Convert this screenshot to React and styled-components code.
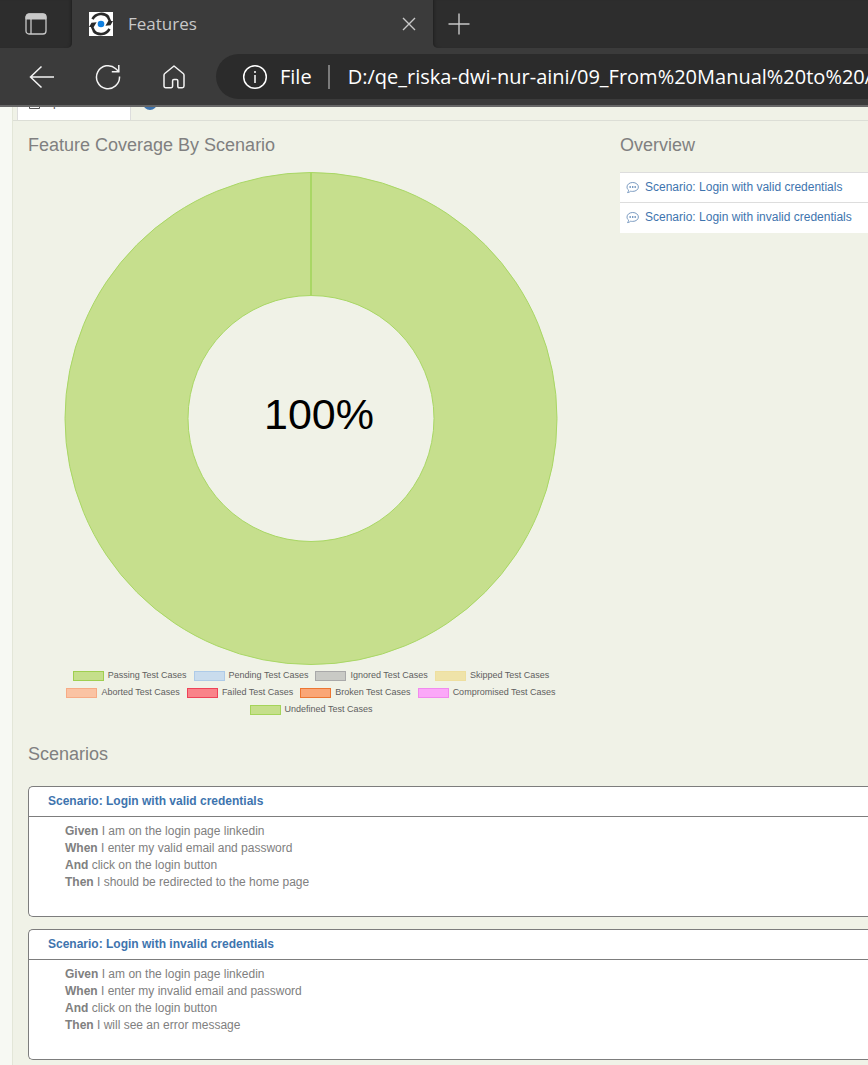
import React from "react";
import styled, { createGlobalStyle } from "styled-components";

const GlobalStyle = createGlobalStyle`
  *, *::before, *::after { box-sizing: border-box; }
  body {
    margin: 0;
    background: #f0f2e7;
    color: #808080;
    font: 12px/17px "Liberation Sans", Arial, sans-serif;
    overflow-x: hidden;
  }
  h2, h3, p, ul { margin: 0; padding: 0; }
  ul { list-style: none; }
  a { color: #3e74ae; text-decoration: none; }
`;

const chromeFont = `"Open Sans", "Noto Sans", sans-serif`;

/* ---------- browser chrome ---------- */

const Chrome = styled.header`
  background: #3b3b3b;
  border-bottom: 2px solid #676767;
  font-family: ${chromeFont};
`;

const TabStrip = styled.div`
  display: flex;
  height: 48px;
  background: #3b3b3b;
`;

const StripSide = styled.div`
  display: flex;
  align-items: center;
  background: #2d2d2d;
  padding: 0 12px;
  flex: ${(p) => (p.$grow ? "1" : "0 0 70px")};
  border-radius: ${(p) => (p.$grow ? "0 0 0 5px" : "0 0 5px 0")};
  box-shadow: inset ${(p) => (p.$grow ? "3px" : "-3px")} 0 3px -2px #202020;
`;

const ActiveTab = styled.div`
  display: flex;
  align-items: center;
  flex: 0 1 361px;
  padding: 0 12px 0 17px;
  gap: 15px;
  color: #c8c8c8;
  font-size: 17px;
  line-height: 24px;
`;

const TabTitle = styled.span`
  flex: 1;
`;

const IconButton = styled.button`
  display: flex;
  align-items: center;
  justify-content: center;
  flex: none;
  width: ${(p) => p.$size || 24}px;
  height: ${(p) => p.$size || 24}px;
  padding: 0;
  border: 0;
  background: none;
  color: ${(p) => (p.$dim ? "#c8c8c8" : "#f4f4f4")};
`;

const Toolbar = styled.div`
  display: flex;
  align-items: center;
  height: 57px;
  padding-left: 28px;
  gap: 38px;
`;

const AddressBar = styled.div`
  display: flex;
  align-items: center;
  flex: 1;
  min-width: 0;
  height: 45px;
  margin-left: -10px;
  padding-left: 26px;
  gap: 12px;
  border-radius: 23px 0 0 23px;
  background: #2b2b2b;
  color: #fff;
  font-size: 20px;
`;

const Divider = styled.span`
  width: 2px;
  height: 24px;
  margin: 0 6px 0 4px;
  background: #7b7b7b;
`;

const AddressInput = styled.input`
  flex: 1;
  min-width: 0;
  height: 32px;
  padding: 0;
  border: 0;
  outline: 0;
  background: none;
  color: inherit;
  font: 20px/28px ${chromeFont};
`;

/* ---------- report page ---------- */

const Report = styled.main`
  margin-left: 12px;
  border-left: 1px solid #e3e6d8;
  background: #f0f2e7;
  padding-bottom: 5px;
`;

const PageShell = styled.div`
  background: #f7f9f3;
`;

const ReportTabs = styled.nav`
  display: flex;
  align-items: flex-end;
  height: 14px;
  padding-left: 4px;
  overflow: hidden;
  border-bottom: 1px solid #dcded6;
`;

const ReportTab = styled.a`
  display: flex;
  align-items: center;
  gap: 5px;
  flex: none;
  height: 36px;
  padding: 0 11px;
  border: 1px solid ${(p) => (p.$active ? "#ddd" : "transparent")};
  border-bottom: 0;
  background: ${(p) => (p.$active ? "#fff" : "none")};
  color: ${(p) => (p.$active ? "#555" : "#3e74ae")};
`;

const Content = styled.div`
  padding-left: 15px;
`;

const SectionTitle = styled.h2`
  color: #808080;
  font-size: 18px;
  font-weight: 400;
  line-height: 20px;
`;

const Columns = styled.div`
  display: grid;
  grid-template-columns: 283fr 124fr;
  gap: 26px;
  padding-top: 14px;
`;

const ChartFigure = styled.figure`
  display: flex;
  flex-direction: column;
  align-items: center;
  margin: 16px 0 0;
`;

const Donut = styled.svg`
  display: block;
  width: 100%;
  max-width: 494px;
`;

const Legend = styled.ul`
  display: flex;
  flex-wrap: wrap;
  justify-content: center;
  column-gap: 7px;
  width: 100%;
  max-width: 500px;
  padding-top: 2px;
`;

const LegendItem = styled.li`
  display: flex;
  align-items: center;
  gap: 4px;
  color: #606060;
  font-size: 9px;
  line-height: 17px;
  white-space: nowrap;
`;

const Swatch = styled.span`
  width: 31px;
  height: 10px;
  margin-top: 1px;
  border: 1px solid ${(p) => p.$line};
  background: ${(p) => p.$fill};
`;

const OverviewList = styled.ul`
  margin-top: 17px;
  padding-bottom: 1px;
  background: #fff;
`;

const OverviewItem = styled.li`
  display: flex;
  align-items: center;
  gap: 6px;
  height: 30px;
  padding-left: 6px;
  border-top: 1px solid #ddd;
  white-space: nowrap;
`;

const Scenarios = styled.section`
  display: flex;
  flex-direction: column;
  gap: 12px;
  padding-top: 26px;

  ${SectionTitle} { margin-bottom: 10px; }
`;

const Card = styled.article`
  min-height: 131px;
  border: 1px solid #7d7d7d;
  border-right: 0;
  border-radius: 5px 0 0 5px;
  background: #fff;
`;

const CardTitle = styled.h3`
  padding: 5px 19px 6px;
  border-bottom: 1px solid #7d7d7d;
  font-size: 12px;
  line-height: 18px;
`;

const Steps = styled.div`
  padding: 6px 36px 0;
  line-height: 17px;
`;

const CoverageIcon = () => (
  <svg width="24" height="24" viewBox="0 0 24 24" aria-hidden="true">
    <rect width="24" height="24" fill="#fff" />
    <g fill="none" stroke="#2a2a2a" strokeWidth="2.6">
      <path d="M3.500 7.200A9.800 9.800 0 0 1 19.500 5.200" />
      <path d="M20.500 16.800A9.800 9.800 0 0 1 4.500 18.800" />
    </g>
    <path d="M0 15L2.500 10.800 7.600 10.200 4.600 15.200 6.500 19 3.800 19.500 1.800 15Z" fill="#2a2a2a" />
    <path d="M24 9L21.500 13.200 16.400 13.800 19.400 8.800 17.500 5 20.200 4.500 22.200 9Z" fill="#2a2a2a" />
    <circle cx="12" cy="12" r="3.3" fill="#0f7fe0" />
  </svg>
);

const CommentIcon = () => (
  <svg width="13" height="13" viewBox="0 0 13 13" aria-hidden="true">
    <path
      d="M6.700 1.500C3.500 1.500 1 3.500 1 6c0 1.300.6 2.400 1.600 3.200-.1 1-.6 1.800-1.100 2.400 1.300-.1 2.400-.7 3.200-1.400.6.200 1.300.2 2 .2 3.200 0 5.700-1.900 5.700-4.400S9.900 1.500 6.700 1.500Z"
      fill="none"
      stroke="#7c9cc2"
      strokeWidth="1"
    />
    <path d="M3.500 6h1.400M6 6h1.400M8.500 6h1.400" stroke="#4d7bb0" strokeWidth="1.400" />
  </svg>
);

const legend = [
  ["Passing Test Cases", "#c5df8b", "#9fcf50"],
  ["Pending Test Cases", "#c9dced", "#aecbe8"],
  ["Ignored Test Cases", "#c9cac5", "#a9a9a9"],
  ["Skipped Test Cases", "#efe3a9", "#eedf9f"],
  ["Aborted Test Cases", "#fac3a3", "#f7ab85"],
  ["Failed Test Cases", "#f98389", "#ee4358"],
  ["Broken Test Cases", "#faa676", "#ec7632"],
  ["Compromised Test Cases", "#fba8f8", "#f18aee"],
  ["Undefined Test Cases", "#c5df8b", "#a5d45a"],
];

const scenarios = [
  {
    id: "valid",
    title: "Scenario: Login with valid credentials",
    steps: [
      ["Given", "I am on the login page linkedin"],
      ["When", "I enter my valid email and password"],
      ["And", "click on the login button"],
      ["Then", "I should be redirected to the home page"],
    ],
  },
  {
    id: "invalid",
    title: "Scenario: Login with invalid credentials",
    steps: [
      ["Given", "I am on the login page linkedin"],
      ["When", "I enter my invalid email and password"],
      ["And", "click on the login button"],
      ["Then", "I will see an error message"],
    ],
  },
];

function BrowserChrome() {
  return (
    <Chrome>
      <TabStrip>
        <StripSide>
          <IconButton aria-label="Tab actions" $dim $size={48}>
            <svg width="22" height="22" viewBox="0 0 22 22" fill="none" stroke="currentColor">
              <rect x="1" y="1" width="20" height="20" rx="3" strokeWidth="1.3" />
              <path d="M1 6V4a3 3 0 0 1 3-3h14a3 3 0 0 1 3 3v2Z" fill="currentColor" />
              <path d="M6 6v15" strokeWidth="1.3" />
            </svg>
          </IconButton>
        </StripSide>
        <ActiveTab>
          <CoverageIcon />
          <TabTitle>Features</TabTitle>
          <IconButton aria-label="Close tab" $dim>
            <svg width="14" height="14" viewBox="0 0 14 14" stroke="currentColor" strokeWidth="1.4">
              <path d="M1 1l12 12M13 1L1 13" />
            </svg>
          </IconButton>
        </ActiveTab>
        <StripSide $grow>
          <IconButton aria-label="New tab" $dim $size={28}>
            <svg width="22" height="22" viewBox="0 0 22 22" stroke="currentColor" strokeWidth="1.4">
              <path d="M11 .5v21M.5 11h21" />
            </svg>
          </IconButton>
        </StripSide>
      </TabStrip>
      <Toolbar>
        <IconButton aria-label="Back" $size={28}>
          <svg width="26" height="24" viewBox="0 0 26 24" fill="none" stroke="currentColor" strokeWidth="1.5">
            <path d="M12.500 1.500L1.500 12l11 10.500M1.500 12H25" />
          </svg>
        </IconButton>
        <IconButton aria-label="Refresh" $size={28}>
          <svg width="26" height="26" viewBox="0 0 26 26" fill="none" stroke="currentColor" strokeWidth="1.5">
            <path d="M24.500 12.500A11.500 11.500 0 1 1 20.800 4.700L23.800 7.800" />
            <path d="M23.800 1v6.800h-7" />
          </svg>
        </IconButton>
        <IconButton aria-label="Home" $size={28}>
          <svg width="22" height="24" viewBox="0 0 22 24" fill="none" stroke="currentColor" strokeWidth="1.500" strokeLinejoin="round">
            <path d="M1 10.200c0-.7.3-1.300.8-1.700L11 1l9.200 7.500c.5.4.8 1 .8 1.700V21c0 1.100-.7 1.700-1.700 1.700h-3.100c-.8 0-1.400-.5-1.400-1.400v-5.600c0-.8-.5-1.300-1.300-1.300h-2.600c-.8 0-1.300.5-1.300 1.300v5.600c0 .9-.6 1.400-1.400 1.400H2.700C1.700 22.700 1 22.100 1 21Z" />
          </svg>
        </IconButton>
        <AddressBar>
          <svg width="26" height="26" viewBox="0 0 26 26" fill="none" stroke="#fff" strokeWidth="1.500" aria-hidden="true">
            <circle cx="13" cy="13" r="11.300" />
            <path d="M13 11v8M13 7v2" />
          </svg>
          <label htmlFor="address">File</label>
          <Divider />
          <AddressInput id="address" defaultValue="D:/qe_riska-dwi-nur-aini/09_From%20Manual%20to%20Automation" />
        </AddressBar>
      </Toolbar>
    </Chrome>
  );
}

function CoverageChart() {
  return (
    <ChartFigure>
      <Donut viewBox="0 0 494 494" role="img" aria-label="Feature coverage: 100% passing">
        <circle cx="247" cy="247.500" r="184.500" fill="none" stroke="#c6df8d" strokeWidth="123" />
        <g fill="none" stroke="#a9d765" strokeWidth="1">
          <circle cx="247" cy="247.500" r="246" />
          <circle cx="247" cy="247.500" r="123" />
          <path d="M247 1.500v123" strokeWidth="2" />
        </g>
        <text x="255" y="258" textAnchor="middle" fontSize="43" fill="#000">100%</text>
      </Donut>
      <Legend>
        {legend.map(([label, fill, line]) => (
          <LegendItem key={label}>
            <Swatch $fill={fill} $line={line} />
            {label}
          </LegendItem>
        ))}
      </Legend>
    </ChartFigure>
  );
}

export default function App() {
  return (
    <>
      <GlobalStyle />
      <BrowserChrome />
      <PageShell>
        <Report>
          <ReportTabs>
            <ReportTab href="#specifications" $active>
              <svg width="11" height="12" viewBox="0 0 11 12" fill="none" stroke="currentColor" aria-hidden="true">
                <path d="M.5.500h10v11h-10ZM2.500 3.500h6M2.500 6.500h6" />
              </svg>
              Specifications
            </ReportTab>
            <ReportTab href="#results">
              <svg width="14" height="14" viewBox="0 0 14 14" aria-hidden="true">
                <circle cx="7" cy="7" r="7" fill="currentColor" />
              </svg>
              Test Results
            </ReportTab>
          </ReportTabs>
          <Content>
            <Columns>
              <section>
                <SectionTitle>Feature Coverage By Scenario</SectionTitle>
                <CoverageChart />
              </section>
              <section>
                <SectionTitle>Overview</SectionTitle>
                <OverviewList>
                  {scenarios.map((s) => (
                    <OverviewItem key={s.id}>
                      <CommentIcon />
                      <a href={`#${s.id}`}>{s.title}</a>
                    </OverviewItem>
                  ))}
                </OverviewList>
              </section>
            </Columns>
            <Scenarios>
              <SectionTitle>Scenarios</SectionTitle>
              {scenarios.map((s) => (
                <Card key={s.id} id={s.id}>
                  <CardTitle>
                    <a href={`#${s.id}`}>{s.title}</a>
                  </CardTitle>
                  <Steps>
                    {s.steps.map(([keyword, text]) => (
                      <p key={keyword}>
                        <b>{keyword}</b> {text}
                      </p>
                    ))}
                  </Steps>
                </Card>
              ))}
            </Scenarios>
          </Content>
        </Report>
      </PageShell>
    </>
  );
}
